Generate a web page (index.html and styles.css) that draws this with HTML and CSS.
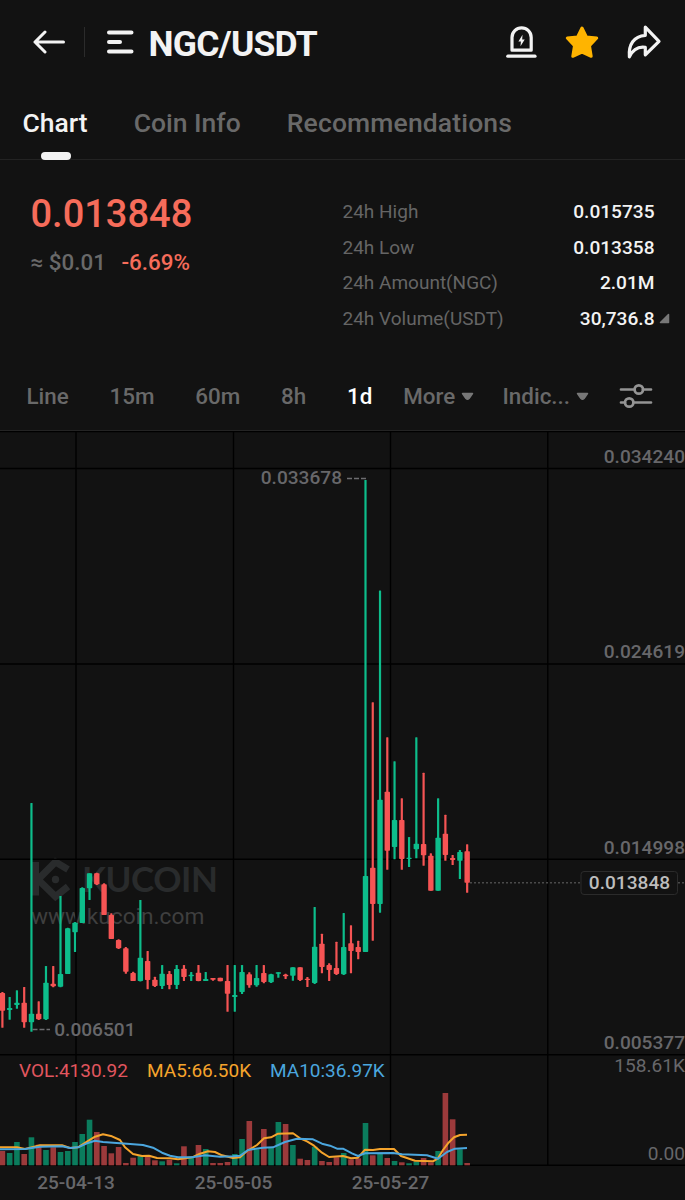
FILE: index.html
```html
<!DOCTYPE html>
<html lang="en">
  <head>
    <meta charset="UTF-8">
    <title>NGC/USDT</title>
    <link rel="stylesheet" href="styles.css">
  </head>
  <body>
    <header class="header">
      <svg class="back-icon" width="34" height="24" viewBox="0 0 34 24">
        <path d="M13 2 L3 12 L13 22 M3 12 H31.5" />
      </svg>
      <span class="header-divider"></span>
      <svg class="menu-icon" width="28" height="24" viewBox="0 0 28 24">
        <path d="M3 2.5 H25.5 M3 12 H14 M3 21.5 H25.5" />
      </svg>
      <h1 class="pair">NGC/USDT</h1>
      <div class="header-actions">
        <svg width="32" height="34" viewBox="0 0 32 34">
          <path class="stroke" d="M6 25.2 V12.5 A9.6 9.6 0 0 1 25.2 12.5 V25.2 Z" />
          <path class="stroke" d="M1.8 31.2 H29" />
          <path class="fill" d="M16.5 9.8 L12.4 16.5 H14.9 L14.5 21.2 L18.7 14.5 H16.2 Z" />
        </svg>
        <svg width="34" height="34" viewBox="0 0 34 34">
          <path class="star" d="M17 3 L21.4 12 L31.7 13 L24.5 20.7 L26.2 31.3 L17 27.2 L7.8 31.3 L9.5 20.7 L2.3 13 L12.6 12 Z" />
        </svg>
        <svg width="36" height="36" viewBox="0 0 36 36">
          <path class="stroke" d="M19.3 3.2 L33 17.3 L19.3 30.8 V23.4 C11.5 22.2 7 25.4 3.4 32.8 C2.4 20.5 7.8 12.2 19.3 11.3 Z" />
        </svg>
      </div>
    </header>

    <nav class="tabs">
      <a class="tab tab-active">Chart</a>
      <a class="tab tab-info">Coin Info</a>
      <a class="tab tab-rec">Recommendations</a>
    </nav>

    <section class="summary">
      <div class="price-box">
        <div class="price">0.013848</div>
        <div class="price-sub">
          <span class="fiat">≈ $0.01</span>
          <span class="change">-6.69%</span>
        </div>
      </div>
      <div class="stats">
        <div class="stat"><span>24h High</span><b>0.015735</b></div>
        <div class="stat"><span>24h Low</span><b>0.013358</b></div>
        <div class="stat"><span>24h Amount(NGC)</span><b>2.01M</b></div>
        <div class="stat">
          <span>24h Volume(USDT)</span><b>30,736.8</b>
          <svg class="corner" width="11" height="11" viewBox="0 0 11 11">
            <path d="M9.5 1.5 V9.5 H1.5 Z" />
          </svg>
        </div>
      </div>
    </section>

    <div class="toolbar">
      <span class="period">Line</span>
      <span class="period">15m</span>
      <span class="period">60m</span>
      <span class="period">8h</span>
      <span class="period period-active">1d</span>
      <span class="period more">More
        <svg class="caret" width="13" height="9" viewBox="0 0 13 9"><path d="M1.5 1.5 H11.5 L8 6.5 Q6.5 8 5 6.5 Z" /></svg>
      </span>
      <span class="period indicators">Indic...
        <svg class="caret" width="13" height="9" viewBox="0 0 13 9"><path d="M1.5 1.5 H11.5 L8 6.5 Q6.5 8 5 6.5 Z" /></svg>
      </span>
      <svg class="settings" width="34" height="28" viewBox="0 0 34 28">
        <path d="M2 7.5 H15.5 M24 7.5 H32 M2 20.5 H6 M14.5 20.5 H32" />
        <circle cx="19.8" cy="7.5" r="4.2" />
        <circle cx="10.2" cy="20.5" r="4.2" />
      </svg>
    </div>

    <svg class="chart" width="685" height="769" viewBox="0 431 685 769">
      <g class="watermark">
        <path d="M35.5 862 V895.5 M68 869.5 L55.5 862 L38 879.5 L55.5 896.5 L68 886.5" />
        <circle cx="55.5" cy="879.5" r="3.7" />
        <text class="mark-name" x="82" y="892" textLength="136">KUCOIN</text>
        <text class="mark-url" x="31" y="923.5">www.kucoin.com</text>
      </g>
      <path class="grid" d="M0 431.5 H685 M0 468.5 H685 M0 664 H685 M0 859.3 H685 M0 1054.7 H685 M0 1165.3 H685 M76 431 V1165 M233.5 431 V1165 M390.5 431 V1165 M547.8 431 V1165" />
      <g id="volumes"></g>
      <g id="candles"></g>
      <path id="ma5" class="ma ma5" />
      <path id="ma10" class="ma ma10" />
      <path class="dash" d="M347 478.5 H366 M32.5 1029.5 H50" />
      <path class="last-line" d="M470 882.7 H580 M678 882.7 H685" />

      <g class="axis">
        <text x="685" y="463">0.034240</text>
        <text x="685" y="658.3">0.024619</text>
        <text x="685" y="853.6">0.014998</text>
        <text x="685" y="1049">0.005377</text>
        <text class="thin" x="685" y="1072">158.61K</text>
        <text class="thin" x="685" y="1159.5">0.00</text>
        <text x="342" y="484">0.033678</text>
        <text x="135.5" y="1036">0.006501</text>
      </g>
      <rect class="last-box" x="581" y="871.5" width="96.5" height="23" rx="3" />
      <text class="last-price" x="629.5" y="888.6">0.013848</text>

      <g class="legend">
        <text class="vol" x="19" y="1077.4">VOL:4130.92</text>
        <text class="t-ma5" x="147" y="1077.4">MA5:66.50K</text>
        <text class="t-ma10" x="270" y="1077.4">MA10:36.97K</text>
      </g>
      <g class="dates">
        <text x="76" y="1189">25-04-13</text>
        <text x="233.5" y="1189">25-05-05</text>
        <text x="390.5" y="1189">25-05-27</text>
      </g>
    </svg>
    <script src="chart.js"></script>
  </body>
</html>
```
FILE: styles.css
```css
body {
  margin: 0;
  width: 685px;
  height: 1200px;
  overflow: hidden;
  background-color: #121212;
  color: #f3f3f3;
  font-family: Roboto, "Liberation Sans", sans-serif;
}

.header {
  display: flex;
  align-items: center;
  height: 84px;
  padding: 0 23px 0 32px;
}

.back-icon,
.menu-icon {
  fill: none;
  stroke: #f3f3f3;
  stroke-width: 3;
  stroke-linecap: round;
  stroke-linejoin: round;
}

.menu-icon {
  stroke-width: 4;
}

.header-divider {
  width: 1px;
  height: 30px;
  margin: 0 20.5px 0 18px;
  background-color: #2b2b2b;
}

.pair {
  margin: 4px 0 0 15px;
  font-size: 35.5px;
  line-height: 40px;
  font-weight: 700;
  letter-spacing: -0.8px;
}

.header-actions {
  display: flex;
  align-items: center;
  gap: 27px;
  margin-left: auto;
  margin-bottom: 1px;
}

.stroke {
  fill: none;
  stroke: #f3f3f3;
  stroke-width: 3.2;
  stroke-linecap: round;
  stroke-linejoin: round;
}

.fill {
  fill: #f3f3f3;
}

.star {
  fill: #ffb400;
  stroke: #ffb400;
  stroke-width: 3;
  stroke-linejoin: round;
}

.tabs {
  display: flex;
  gap: 46px;
  height: 75px;
  padding-left: 22.5px;
  border-bottom: 1px solid #232323;
  font-size: 26.5px;
  line-height: 77px;
  font-weight: 500;
  color: #696969;
}

.tab {
  position: relative;
}

.tab-rec {
  letter-spacing: 0.15px;
}

.tab-active {
  color: #f3f3f3;
}

.tab-active::after {
  content: "";
  position: absolute;
  left: 18px;
  bottom: -1px;
  width: 30px;
  height: 8px;
  border-radius: 4px;
  background-color: #f3f3f3;
}

.summary {
  display: flex;
  height: 202px;
}

.price-box {
  width: 312px;
  padding: 32px 0 0 30.5px;
}

.price {
  font-size: 38px;
  line-height: 44px;
  font-weight: 500;
  color: #f66c5a;
}

.price-sub {
  display: flex;
  gap: 15.5px;
  margin-top: 12px;
  font-size: 22.4px;
  line-height: 28px;
  font-weight: 500;
}

.fiat {
  color: #696969;
}

.change {
  color: #f66c5a;
}

.stats {
  width: 312px;
  padding-top: 34px;
}

.stat {
  display: flex;
  align-items: center;
  justify-content: space-between;
  position: relative;
  height: 35.5px;
  font-size: 19px;
  color: #656565;
}

.stat b {
  font-weight: 500;
  font-size: 19.1px;
  color: #f3f3f3;
}

.corner {
  position: absolute;
  right: -15.5px;
  top: 12px;
}

.corner path,
.caret path {
  fill: #777;
  stroke: #777;
  stroke-width: 1.5;
  stroke-linejoin: round;
}

.toolbar {
  display: flex;
  align-items: center;
  height: 68px;
  padding-left: 26.5px;
  border-bottom: 1px solid #242424;
  font-size: 22.4px;
  font-weight: 500;
  color: #696969;
  gap: 40.8px;
}

.period {
  display: flex;
  align-items: center;
}

.period-active {
  color: #fff;
}

.more {
  margin-left: -10px;
}

.more .caret {
  margin-left: 6px;
}

.indicators {
  margin-left: -12.5px;
}

.indicators .caret {
  margin-left: 6.5px;
}

.settings {
  margin-left: -11.5px;
  fill: none;
  stroke: #949494;
  stroke-width: 2.7;
  stroke-linecap: round;
}

.chart {
  display: block;
}

.grid {
  fill: none;
  stroke: #000;
  stroke-width: 1.4;
}

.watermark path {
  fill: none;
  stroke: #292b2c;
  stroke-width: 7;
}

.watermark circle {
  fill: #292b2c;
}

.mark-name {
  font-family: Lato, sans-serif;
  font-size: 35px;
  font-weight: 700;
  fill: #292b2c;
}

.mark-url {
  font-size: 22.7px;
  fill: #3f3f3f;
}

.up {
  fill: #0dbd8b;
}

.down {
  fill: #f65454;
}

.vol-up {
  fill: #0b7c5d;
}

.vol-down {
  fill: #9c3a3b;
}

.ma {
  fill: none;
  stroke-width: 2;
  stroke-linejoin: round;
}

.ma5 {
  stroke: #f5a42c;
}

.ma10 {
  stroke: #4ba6de;
}

.dash {
  stroke: #6d6d70;
  stroke-width: 1.5;
  stroke-dasharray: 5 2;
}

.last-line {
  stroke: #4a4a4a;
  stroke-width: 1.5;
  stroke-dasharray: 2 2;
}

.last-box {
  fill: #121212;
  stroke: #2b2b2b;
}

.last-price {
  font-size: 19.1px;
  font-weight: 500;
  text-anchor: middle;
  fill: #bdbdbd;
}

.axis {
  font-size: 19.1px;
  font-weight: 500;
  text-anchor: end;
  fill: #67676a;
}

.thin {
  font-weight: 400;
}

.legend {
  font-size: 19px;
}

.vol {
  fill: #e1565f;
}

.t-ma5 {
  fill: #f5a42c;
}

.t-ma10 {
  fill: #4ba6de;
}

.dates {
  font-size: 19px;
  font-weight: 500;
  text-anchor: middle;
  fill: #67676a;
}
```
FILE: chart.js
```js
// direction, high, body top, body bottom, low, volume top
const candles = [
  ["d", 992, 993, 1010.7, 1027.7, 1151],
  ["u", 997, 1008, 1010, 1019.7, 1153],
  ["u", 990.3, 1002.7, 1005, 1008.7, 1142],
  ["d", 987, 1002.7, 1022.3, 1027.7, 1154],
  ["u", 803, 1013.7, 1022.3, 1031.7, 1137.3],
  ["d", 1001.3, 1013.7, 1019.3, 1020, 1144.7],
  ["u", 966, 982.7, 1019.3, 1020, 1150],
  ["d", 966, 983.7, 986.3, 987.3, 1147.3],
  ["u", 896, 974, 986.7, 987.3, 1152],
  ["u", 927.7, 928.3, 974, 974, 1151],
  ["u", 922, 922.7, 932.3, 952, 1142],
  ["u", 887.3, 888, 923, 923, 1134],
  ["u", 873.3, 873.3, 888.3, 900, 1119.7],
  ["d", 872.7, 873.3, 884.3, 885, 1132],
  ["d", 883.3, 884.3, 915, 915, 1146],
  ["d", 913.3, 915, 939, 939, 1153.3],
  ["d", 939.3, 940, 948.3, 949, 1147],
  ["d", 947, 948.3, 971.7, 973.7, 1163],
  ["d", 971.7, 973, 981, 981, 1157.7],
  ["u", 900, 957.7, 981, 981.5, 1155.7],
  ["d", 951, 961, 980, 989.3, 1155.3],
  ["d", 976.7, 979.7, 986, 987, 1160.3],
  ["u", 965, 973.7, 986, 989, 1161.3],
  ["d", 971, 974, 985, 989.3, 1159.7],
  ["u", 965, 969, 985, 989, 1163.3],
  ["d", 965, 968.7, 977, 981, 1146.3],
  ["u", 972, 974.7, 976.3, 981, 1157.3],
  ["d", 965, 972.7, 981, 981.3, 1145],
  ["u", 972, 979, 981, 981, 1149],
  ["d", 978, 978, 979.7, 980.7, 1163],
  ["d", 977.7, 977.7, 981.3, 981.3, 1163],
  ["d", 965, 981, 993.7, 1011.7, 1162],
  ["u", 965, 995, 997, 1011.7, 1154],
  ["u", 965, 972, 992, 994, 1139],
  ["d", 972.3, 974.3, 985.3, 987.7, 1121],
  ["u", 965, 978, 985.3, 986.7, 1149.3],
  ["d", 965, 973, 982, 983.3, 1129],
  ["u", 973.7, 974.3, 982.3, 983, 1147.3],
  ["u", 972.3, 972.3, 973.7, 977.7, 1122],
  ["d", 973.7, 974.7, 976.3, 979, 1124],
  ["u", 967.3, 967.3, 975.7, 980.7, 1145],
  ["d", 967.3, 967.3, 980, 981, 1158.7],
  ["d", 977, 978.7, 980, 987, 1160],
  ["u", 907, 946.7, 983, 984, 1146.7],
  ["d", 933.7, 943.7, 967, 973.3, 1161],
  ["d", 963.3, 965, 970, 981, 1162],
  ["d", 941.7, 968, 974, 975, 1157.3],
  ["u", 913, 947, 974.3, 975, 1153],
  ["d", 925.3, 943.3, 951, 973.3, 1159.3],
  ["d", 940.7, 947, 952, 959.3, 1158.3],
  ["u", 480, 876, 952, 952, 1123],
  ["d", 702.3, 867.7, 904, 940.7, 1155.3],
  ["u", 590.5, 799.7, 904, 912.7, 1153],
  ["d", 737.3, 791.7, 850.7, 869.7, 1158],
  ["u", 761.3, 820, 847, 859.3, 1161],
  ["d", 798.3, 820, 859, 869.7, 1162.3],
  ["u", 837, 857.7, 859, 867, 1163.3],
  ["u", 737.3, 843.7, 849.3, 858.3, 1161.7],
  ["d", 772.7, 844, 855.3, 865.7, 1158],
  ["d", 853.3, 855.7, 890.7, 890.7, 1162.3],
  ["u", 798.3, 837.7, 890.7, 890.7, 1151],
  ["d", 814.7, 833.7, 855, 860.7, 1093],
  ["d", 855, 858, 860, 865, 1119.3],
  ["u", 850, 852, 860.7, 879, 1149.3],
  ["d", 844.3, 851.3, 882.7, 892.7, 1163]
];

const ma5 = [
  [0, 1147.3], [17, 1147.3], [25, 1149], [40, 1145.3], [62, 1145.3], [70, 1148], [78, 1147.3],
  [87, 1141.7], [95, 1136.7], [103, 1134.3], [112, 1136.3], [120, 1140], [125, 1147.3],
  [133, 1154], [142, 1156], [149, 1155.7], [157, 1158], [170, 1158.3], [178, 1159.3],
  [192, 1157.3], [200, 1153.7], [208, 1151.3], [215, 1152], [222, 1155.3], [233, 1158],
  [240, 1157.3], [247, 1151], [257, 1145], [264, 1138.3], [271, 1137.3], [278, 1133.7],
  [293, 1133.3], [300, 1138.3], [307, 1141.3], [314, 1145.7], [322, 1152.7], [329, 1157],
  [343, 1156], [351, 1158.3], [358, 1157.7], [365, 1149.7], [373, 1150], [380, 1149],
  [394, 1149], [401, 1156], [415, 1160.7], [433, 1161.3], [438, 1158.3], [443, 1150],
  [448, 1143.3], [454, 1137.3], [460, 1135], [467, 1134.7]
];

const ma10 = [
  [0, 1149.3], [25, 1149], [40, 1146.7], [62, 1146.3], [70, 1148], [78, 1147.3], [87, 1143.3],
  [95, 1140.7], [103, 1142], [127, 1143.7], [143, 1145], [153, 1147.7], [162, 1152.7],
  [170, 1155.7], [178, 1157.3], [192, 1157.3], [205, 1155.3], [220, 1156.7], [233, 1156.3],
  [240, 1155.7], [248, 1150], [263, 1147.7], [273, 1147.3], [285, 1142], [297, 1138.7],
  [313, 1139.3], [322, 1143.7], [330, 1145.7], [337, 1148.7], [343, 1148.7], [352, 1153.3],
  [358, 1156], [365, 1153.3], [393, 1153], [402, 1154.3], [427, 1155.3], [438, 1158.7],
  [447, 1152], [455, 1148.7], [467, 1148]
];

const step = 7.262;
const base = 1165.3;

function rect(x, y, w, h, cls, rx) {
  return `<rect class="${cls}" x="${x}" y="${y}" width="${w}" height="${h}" rx="${rx}" />`;
}

let bars = "";
let sticks = "";
candles.forEach(([dir, high, top, bottom, low, vol], i) => {
  const x = 2.4 + i * step;
  const cls = dir === "u" ? "up" : "down";
  bars += rect(x - 2.8, vol, 5.6, base - vol, "vol-" + cls, 0);
  sticks += rect(x - 1.1, high, 2.2, low - high, cls, 0.5);
  sticks += rect(x - 2.7, top, 5.4, bottom - top, cls, 0.7);
});
document.getElementById("volumes").innerHTML = bars;
document.getElementById("candles").innerHTML = sticks;
document.getElementById("ma5").setAttribute("d", "M" + ma5.join(" L"));
document.getElementById("ma10").setAttribute("d", "M" + ma10.join(" L"));
```
